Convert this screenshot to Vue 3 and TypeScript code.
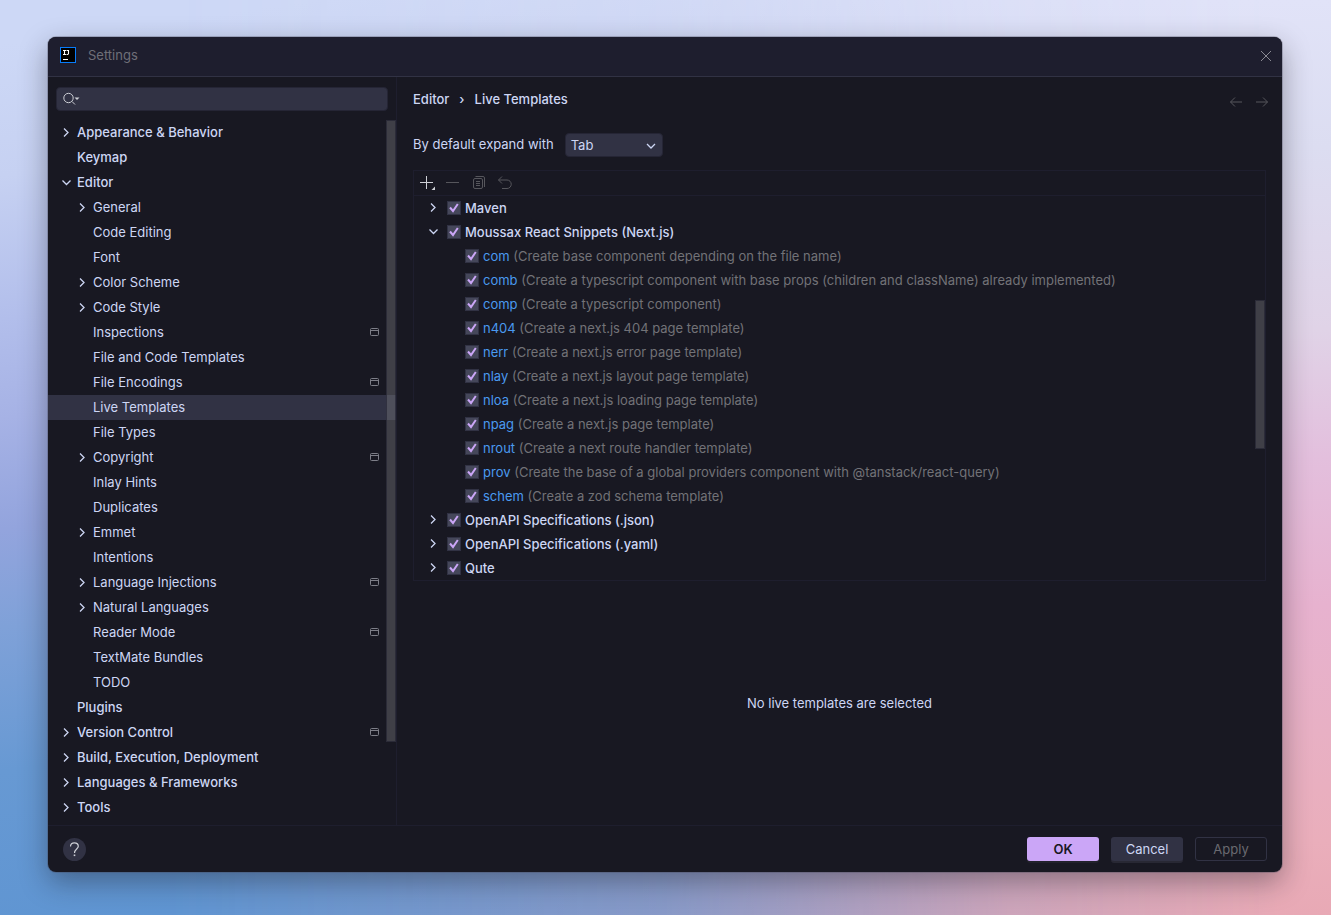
<script setup lang="ts">
import { ref } from 'vue'

type Arrow = 'right' | 'down' | ''
interface NavItem {
  label: string
  level: number
  arrow: Arrow
  project?: boolean
}
interface TemplateRow {
  name: string
  description?: string
  arrow: Arrow
  enabled: boolean
}

const nav: NavItem[] = [
  { label: 'Appearance & Behavior', level: 0, arrow: 'right' },
  { label: 'Keymap', level: 0, arrow: '' },
  { label: 'Editor', level: 0, arrow: 'down' },
  { label: 'General', level: 1, arrow: 'right' },
  { label: 'Code Editing', level: 1, arrow: '' },
  { label: 'Font', level: 1, arrow: '' },
  { label: 'Color Scheme', level: 1, arrow: 'right' },
  { label: 'Code Style', level: 1, arrow: 'right' },
  { label: 'Inspections', level: 1, arrow: '', project: true },
  { label: 'File and Code Templates', level: 1, arrow: '' },
  { label: 'File Encodings', level: 1, arrow: '', project: true },
  { label: 'Live Templates', level: 1, arrow: '' },
  { label: 'File Types', level: 1, arrow: '' },
  { label: 'Copyright', level: 1, arrow: 'right', project: true },
  { label: 'Inlay Hints', level: 1, arrow: '' },
  { label: 'Duplicates', level: 1, arrow: '' },
  { label: 'Emmet', level: 1, arrow: 'right' },
  { label: 'Intentions', level: 1, arrow: '' },
  { label: 'Language Injections', level: 1, arrow: 'right', project: true },
  { label: 'Natural Languages', level: 1, arrow: 'right' },
  { label: 'Reader Mode', level: 1, arrow: '', project: true },
  { label: 'TextMate Bundles', level: 1, arrow: '' },
  { label: 'TODO', level: 1, arrow: '' },
  { label: 'Plugins', level: 0, arrow: '' },
  { label: 'Version Control', level: 0, arrow: 'right', project: true },
  { label: 'Build, Execution, Deployment', level: 0, arrow: 'right' },
  { label: 'Languages & Frameworks', level: 0, arrow: 'right' },
  { label: 'Tools', level: 0, arrow: 'right' },
]

const templates = ref<TemplateRow[]>([
  { name: 'Maven', arrow: 'right', enabled: true },
  { name: 'Moussax React Snippets (Next.js)', arrow: 'down', enabled: true },
  { name: 'com', description: 'Create base component depending on the file name', arrow: '', enabled: true },
  { name: 'comb', description: 'Create a typescript component with base props (children and className) already implemented', arrow: '', enabled: true },
  { name: 'comp', description: 'Create a typescript component', arrow: '', enabled: true },
  { name: 'n404', description: 'Create a next.js 404 page template', arrow: '', enabled: true },
  { name: 'nerr', description: 'Create a next.js error page template', arrow: '', enabled: true },
  { name: 'nlay', description: 'Create a next.js layout page template', arrow: '', enabled: true },
  { name: 'nloa', description: 'Create a next.js loading page template', arrow: '', enabled: true },
  { name: 'npag', description: 'Create a next.js page template', arrow: '', enabled: true },
  { name: 'nrout', description: 'Create a next route handler template', arrow: '', enabled: true },
  { name: 'prov', description: 'Create the base of a global providers component with @tanstack/react-query', arrow: '', enabled: true },
  { name: 'schem', description: 'Create a zod schema template', arrow: '', enabled: true },
  { name: 'OpenAPI Specifications (.json)', arrow: 'right', enabled: true },
  { name: 'OpenAPI Specifications (.yaml)', arrow: 'right', enabled: true },
  { name: 'Qute', arrow: 'right', enabled: true },
])

const selected = ref('Live Templates')
const query = ref('')
const expandKey = ref('Tab')
</script>

<template>
  <div class="desktop">
    <section class="window">
      <header class="titlebar">
        <svg class="logo" width="16" height="16" viewBox="0 0 16 16">
          <rect x="0.5" y="0.5" width="15" height="15" fill="#000" stroke="#087cfa" />
          <path d="M3 3.500h3M4.500 3.500v4M3 7.500h3M6.500 3.500h2v3.100q0 .9-1 .9h-1M3 12.500h5" fill="none" stroke="#fff" stroke-width="1.100" />
        </svg>
        <h1>Settings</h1>
        <button class="icon-btn close" aria-label="Close">
          <svg width="12" height="12" viewBox="0 0 12 12"><path d="M1 1l10 10M11 1L1 11" stroke="#8a8a93" fill="none" /></svg>
        </button>
      </header>

      <div class="body">
        <aside class="sidebar">
          <label class="search">
            <svg width="18" height="16" viewBox="0 0 18 16">
              <circle cx="6.500" cy="7" r="4.700" fill="none" stroke="#ced0d6" />
              <path d="M10 10.500l3 3" stroke="#ced0d6" fill="none" />
              <path d="M12.500 6.500h5l-2.500 2.500z" fill="#ced0d6" />
            </svg>
            <input v-model="query" type="text" aria-label="Search settings" />
          </label>
          <nav class="tree">
            <a
              v-for="item in nav"
              :key="item.label"
              href="#"
              class="nav-row"
              :class="{ child: item.level === 1, selected: item.label === selected }"
              @click.prevent="selected = item.label"
            >
              <span class="chevron">
                <svg v-if="item.arrow === 'right'" width="16" height="16" viewBox="0 0 16 16"><path d="M6 4.500l4 4-4 4" /></svg>
                <svg v-else-if="item.arrow === 'down'" width="16" height="16" viewBox="0 0 16 16"><path d="M4.500 6.500l4 4 4-4" /></svg>
              </span>
              <span class="nav-label">{{ item.label }}</span>
              <svg v-if="item.project" class="project" width="9" height="8" viewBox="0 0 9 8">
                <rect x="0.5" y="0.5" width="8" height="7" rx="1" /><path d="M1 2.500h7" />
              </svg>
            </a>
            <span class="thumb nav-thumb"></span>
          </nav>
        </aside>

        <main class="content">
          <div class="crumbs">
            <a href="#">Editor</a>
            <span class="sep">›</span>
            <span>Live Templates</span>
            <span class="history">
              <button class="icon-btn" aria-label="Back" disabled>
                <svg width="14" height="12" viewBox="0 0 14 12"><path d="M6 1.500L1.500 6 6 10.500M1.500 6H13" /></svg>
              </button>
              <button class="icon-btn" aria-label="Forward" disabled>
                <svg width="14" height="12" viewBox="0 0 14 12"><path d="M8 1.500L12.500 6 8 10.500M12.500 6H1" /></svg>
              </button>
            </span>
          </div>

          <div class="expand">
            <label for="expand-key">By default expand with</label>
            <span class="select">
              <select id="expand-key" v-model="expandKey">
                <option>Tab</option>
                <option>Enter</option>
                <option>Space</option>
              </select>
              <svg width="10" height="6" viewBox="0 0 10 6"><path d="M1 1l4 4 4-4" /></svg>
            </span>
          </div>

          <div class="panel">
            <div class="toolbar">
              <button class="icon-btn" aria-label="Add">
                <svg width="16" height="16" viewBox="0 0 16 16">
                  <path d="M1 7.500h13M7.500 1v13" stroke="#ced0d6" fill="none" />
                  <path d="M16 11.500V15h-3.500z" fill="#ced0d6" />
                </svg>
              </button>
              <button class="icon-btn muted" aria-label="Remove" disabled>
                <svg width="16" height="16" viewBox="0 0 16 16"><path d="M1 7.500h13" /></svg>
              </button>
              <button class="icon-btn muted" aria-label="Duplicate" disabled>
                <svg width="16" height="16" viewBox="0 0 16 16">
                  <rect x="2.500" y="3.500" width="9" height="10" rx="1.500" />
                  <path d="M4.500 1.500h7.500a1.500 1.500 0 0 1 1.500 1.500V12M5 6.500h4M5 8.500h4M5 10.500h4" />
                </svg>
              </button>
              <button class="icon-btn muted" aria-label="Restore" disabled>
                <svg width="16" height="16" viewBox="0 0 16 16"><path d="M5 1.500L1.500 5 5 8.500M1.500 5H10a4 4 0 0 1 0 8.500H5" /></svg>
              </button>
            </div>
            <ul class="templates">
              <li v-for="(row, i) in templates" :key="row.name" class="row" :class="{ leaf: row.description }">
                <span v-if="!row.description" class="chevron">
                  <svg v-if="row.arrow === 'right'" width="16" height="16" viewBox="0 0 16 16"><path d="M6 3.500l4 4-4 4" /></svg>
                  <svg v-else width="16" height="16" viewBox="0 0 16 16"><path d="M4.500 5.500l4 4 4-4" /></svg>
                </span>
                <span class="check">
                  <input :id="'tpl-' + i" v-model="row.enabled" type="checkbox" />
                  <svg v-if="row.enabled" width="14" height="14" viewBox="0 0 14 14"><path d="M3 6.500l3 3.500L10.800 3" /></svg>
                </span>
                <label :for="'tpl-' + i">
                  <template v-if="row.description"><span class="abbr">{{ row.name }}</span> ({{ row.description }})</template>
                  <template v-else>{{ row.name }}</template>
                </label>
              </li>
            </ul>
            <span class="thumb list-thumb"></span>
          </div>

          <p class="empty">No live templates are selected</p>
        </main>
      </div>

      <footer class="footer">
        <button class="help" aria-label="Help">
          <svg width="13" height="17" viewBox="0 0 13 17">
            <path d="M2.500 5.500C2.500 3 4 1.800 6.300 1.800S10.300 3 10.300 5.200C10.300 8 6.500 8 6.500 12" fill="none" stroke="#ced0d6" stroke-width="1.200" />
            <rect x="5.700" y="13.500" width="1.600" height="1.600" fill="#ced0d6" />
          </svg>
        </button>
        <button class="btn ok">OK</button>
        <button class="btn cancel">Cancel</button>
        <button class="btn apply" disabled>Apply</button>
      </footer>
    </section>
  </div>
</template>

<style>
body {
  margin: 0;
}
</style>

<style scoped>
* {
  box-sizing: border-box;
}
.desktop {
  position: relative;
  isolation: isolate;
  min-height: 100vh;
  display: flex;
  padding: 37px 49px 43px 48px;
  font: 13px/16px Inter, 'Noto Sans', sans-serif;
  color: #cdd6f4;
  background: linear-gradient(
    172deg,
    #cdd8f6 4%,
    #c6d1f2 16%,
    #b2beeb 29%,
    #a6b2e5 38%,
    #93a4dd 48%,
    #7fa1d8 57%,
    #6799d3 70%,
    #5f95d2 85%,
    #5e90cc 100%
  );
}
.desktop::before {
  content: '';
  position: absolute;
  inset: 0;
  z-index: -1;
  background: linear-gradient(
    #e1e3f8,
    #dcddf1 16%,
    #e0d3e7 36%,
    #e3bfdd 50%,
    #e7b2cf 66%,
    #e8b0c4 80%,
    #eaaebb 92%,
    #e8a9b5
  );
  mask-image: linear-gradient(90deg, transparent 12%, rgba(0, 0, 0, 0.3) 50%, rgba(0, 0, 0, 0.8) 76%, #000 96%);
}
.window {
  flex: 1;
  min-width: 0;
  display: flex;
  flex-direction: column;
  overflow: hidden;
  border-radius: 8px;
  background: #181822;
  box-shadow: 0 0 0 1px rgba(70, 70, 90, 0.3), 0 10px 28px rgba(20, 20, 30, 0.38);
}
.titlebar {
  display: flex;
  align-items: center;
  height: 40px;
  padding: 0 10px 3px 12px;
  background: #1e1e2e;
  border-bottom: 1px solid #313244;
}
h1 {
  margin: 0 0 0 12px;
  font-size: 13px;
  font-weight: 400;
  color: #6f6f78;
}
button {
  font: inherit;
}
.icon-btn {
  display: flex;
  padding: 0;
  border: 0;
  background: none;
}
.close {
  margin-left: auto;
  padding-top: 2px;
}
.body {
  flex: 1;
  display: flex;
}
.sidebar {
  width: 349px;
  flex: none;
  border-right: 1px solid #1e1e2e;
}
.search {
  display: flex;
  align-items: center;
  height: 24px;
  margin: 10px 8px 9px;
  padding: 0 5px;
  border: 1px solid #252535;
  border-radius: 4px;
  background: #313244;
}
.search input {
  flex: 1;
  min-width: 0;
  border: 0;
  outline: 0;
  background: none;
  color: inherit;
  font: inherit;
}
.tree {
  position: relative;
}
.nav-row {
  display: flex;
  align-items: center;
  height: 25px;
  padding: 0 17px 1px 10px;
  color: inherit;
  font-weight: 500;
  text-decoration: none;
}
.child {
  padding-left: 26px;
  font-weight: 400;
}
.selected {
  background: #313244;
}
.chevron {
  width: 16px;
  height: 16px;
  flex: none;
}
.chevron svg {
  display: block;
}
.chevron path,
.select path {
  fill: none;
  stroke: #cdd6f4;
  stroke-width: 1.3;
}
.nav-label {
  flex: 1;
  margin-left: 3px;
}
.project {
  fill: none;
  stroke: #7d7e88;
}
.thumb {
  position: absolute;
  width: 10px;
  background: rgba(122, 122, 128, 0.4);
  border: 1px solid rgba(30, 30, 46, 0.6);
}
.nav-thumb {
  top: 0;
  right: 0;
  height: 622px;
}
.content {
  flex: 1;
  min-width: 0;
  display: flex;
  flex-direction: column;
  padding: 0 16px;
}
.crumbs {
  display: flex;
  align-items: center;
  gap: 10px;
  height: 44px;
  font-weight: 500;
}
.crumbs a {
  color: inherit;
  text-decoration: none;
}
.history {
  display: flex;
  gap: 12px;
  margin: 0 -3px 0 auto;
  padding-top: 6px;
}
.history path,
.muted svg {
  fill: none;
  stroke: #56565c;
}
.expand {
  display: flex;
  align-items: center;
  gap: 11px;
  height: 24px;
  margin: 12px 0 13px;
}
.expand label {
  padding-bottom: 2px;
}
.select {
  position: relative;
  display: flex;
}
.select select {
  appearance: none;
  width: 98px;
  height: 24px;
  padding: 0 5px;
  border: 1px solid #252535;
  border-radius: 4px;
  background: #313244;
  color: inherit;
  font: inherit;
}
.select svg {
  position: absolute;
  right: 7px;
  top: 10px;
  pointer-events: none;
}
.panel {
  position: relative;
  border: 1px solid #1e1e2e;
}
.toolbar {
  display: flex;
  align-items: center;
  gap: 10px;
  height: 25px;
  padding-left: 5px;
  border-bottom: 1px solid #1e1e2e;
}
.templates {
  margin: 0;
  padding: 0;
  list-style: none;
}
.row {
  display: flex;
  align-items: center;
  height: 24px;
  padding-left: 11px;
  font-weight: 500;
}
.leaf {
  padding-left: 51px;
  font-weight: 400;
  color: #727277;
}
.row .chevron {
  margin-right: 6px;
}
.check {
  position: relative;
  display: flex;
  margin-right: 4px;
}
.check input {
  appearance: none;
  width: 14px;
  height: 14px;
  margin: 0;
  border: 1px solid #313244;
  background: #45475a;
}
.check svg {
  position: absolute;
  inset: 0;
  pointer-events: none;
}
.check path {
  fill: none;
  stroke: #cba6f7;
  stroke-width: 2;
}
.abbr {
  color: #4a9af0;
}
.list-thumb {
  top: 129px;
  right: 0;
  height: 149px;
}
.empty {
  flex: 1;
  display: flex;
  align-items: center;
  justify-content: center;
  margin: 0;
}
.footer {
  display: flex;
  align-items: center;
  gap: 12px;
  height: 47px;
  padding: 0 15px;
  border-top: 1px solid #1e1e2e;
}
.help {
  display: flex;
  align-items: center;
  justify-content: center;
  width: 23px;
  height: 23px;
  margin-right: auto;
  padding: 0;
  border: 0;
  border-radius: 50%;
  background: #313244;
}
.btn {
  width: 72px;
  height: 24px;
  padding: 0;
  border: 0;
  border-radius: 3px;
}
.ok {
  background: #cba6f7;
  color: #181822;
  font-weight: 600;
  box-shadow: 0 2px 0 #22222c;
}
.cancel {
  background: #313244;
  color: #cdd6f4;
  box-shadow: 0 2px 0 #282834;
}
.apply {
  border: 1px solid #313244;
  background: none;
  color: #6a6a70;
}
</style>
